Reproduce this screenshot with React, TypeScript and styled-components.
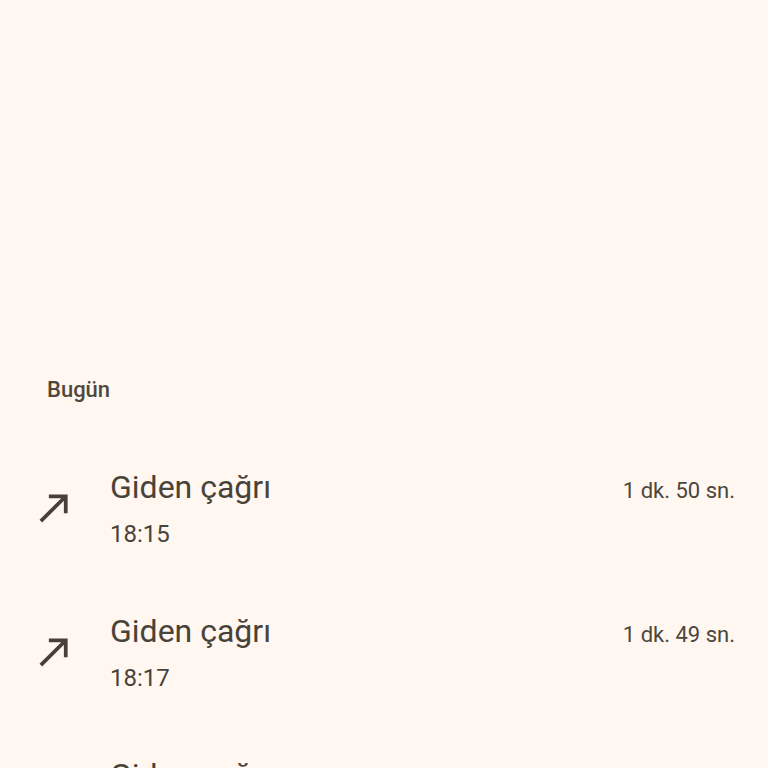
import React from "react";
import styled, { createGlobalStyle } from "styled-components";

const GlobalStyle = createGlobalStyle`
  html, body {
    margin: 0;
    padding: 0;
    overflow: hidden;
    background: #fff7f0;
  }
`;

type Call = {
  id: number;
  title: string;
  time: string;
  duration: string;
};

const calls: Call[] = [
  { id: 1, title: "Giden çağrı", time: "18:15", duration: "1 dk. 50 sn." },
  { id: 2, title: "Giden çağrı", time: "18:17", duration: "1 dk. 49 sn." },
  { id: 3, title: "Giden çağrı", time: "18:20", duration: "1 dk. 12 sn." },
];

const OutgoingIcon: React.FC = () => (
  <IconBox viewBox="0 0 24 24" aria-hidden="true">
    <path d="M9 5v2h6.59L4 18.59 5.41 20 17 8.41V15h2V5z" fill="currentColor" />
  </IconBox>
);

const App: React.FC = () => {
  return (
    <Page>
      <GlobalStyle />
      <TopArea />
      <SectionTitle>Bugün</SectionTitle>
      <List>
        {calls.map((c) => (
          <Row key={c.id}>
            <OutgoingIcon />
            <Body>
              <TopLine>
                <Title>{c.title}</Title>
                <Duration>{c.duration}</Duration>
              </TopLine>
              <Time>{c.time}</Time>
            </Body>
          </Row>
        ))}
      </List>
    </Page>
  );
};

const Page = styled.div`
  width: 768px;
  height: 768px;
  overflow: hidden;
  background: #fff7f0;
  color: #4a4539;
  font-family: Roboto, "Noto Sans", sans-serif;
`;

const TopArea = styled.div`
  height: 376px;
`;

const SectionTitle = styled.div`
  padding-left: 47px;
  font-size: 22px;
  font-weight: 500;
  line-height: 28px;
  color: #4e483d;
`;

const List = styled.div`
  display: flex;
  flex-direction: column;
  margin-top: 35px;
`;

const Row = styled.div`
  display: flex;
  align-items: flex-start;
  gap: 33px;
  height: 144px;
  box-sizing: border-box;
  padding: 28px 33px 0 32px;
  flex: none;
`;

const IconBox = styled.svg`
  width: 45px;
  height: 45px;
  flex: none;
  margin-top: 18px;
  color: #45413a;
`;

const Body = styled.div`
  flex: 1;
  display: flex;
  flex-direction: column;
`;

const TopLine = styled.div`
  display: flex;
  justify-content: space-between;
  align-items: baseline;
  height: 40px;
`;

const Title = styled.div`
  font-size: 32px;
  line-height: 40px;
  font-weight: 400;
  color: #48433a;
`;

const Duration = styled.div`
  font-size: 22px;
  line-height: 40px;
  color: #4c463c;
`;

const Time = styled.div`
  margin-top: 7px;
  font-size: 24px;
  line-height: 40px;
  color: #48433a;
`;

export default App;
